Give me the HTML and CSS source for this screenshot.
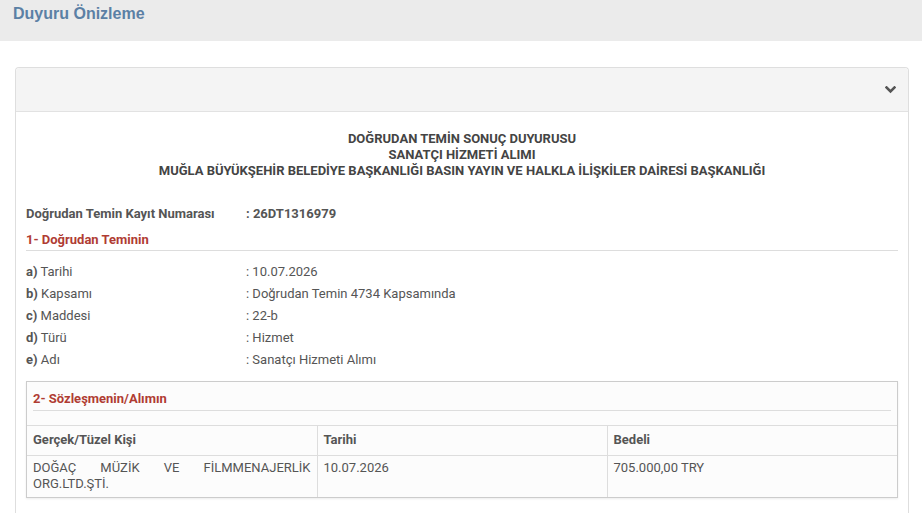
FILE: index.html
```html
<!DOCTYPE html>
<html lang="tr">
<head>
    <meta charset="UTF-8">
    <meta name="viewport" content="width=device-width, initial-scale=1.0">
    <title>Duyuru Önizleme</title>
    <link rel="stylesheet" href="styles.css">
</head>
<body>
    <div class="page-head">
        <h1 class="page-title">Duyuru Önizleme</h1>
    </div>

    <div class="panel">
        <div class="panel-head">
            <svg class="chevron" width="11" height="8" viewBox="0 0 11 8">
                <polyline points="1.5,1.5 5.5,5.5 9.5,1.5" fill="none" stroke="#555" stroke-width="2.6" stroke-linecap="square"/>
            </svg>
        </div>
        <div class="panel-body">
            <div class="doc-title">
                DOĞRUDAN TEMİN SONUÇ DUYURUSU<br>
                SANATÇI HİZMETİ ALIMI<br>
                MUĞLA BÜYÜKŞEHİR BELEDİYE BAŞKANLIĞI BASIN YAYIN VE HALKLA İLİŞKİLER DAİRESİ BAŞKANLIĞI
            </div>

            <div class="row reg-row">
                <span class="key">Doğrudan Temin Kayıt Numarası</span>
                <span class="val">: 26DT1316979</span>
            </div>

            <h3 class="section">1- Doğrudan Teminin</h3>

            <div class="rows">
                <div class="row"><span class="key"><b>a)</b> Tarihi</span><span class="val">: 10.07.2026</span></div>
                <div class="row"><span class="key"><b>b)</b> Kapsamı</span><span class="val">: Doğrudan Temin 4734 Kapsamında</span></div>
                <div class="row"><span class="key"><b>c)</b> Maddesi</span><span class="val">: 22-b</span></div>
                <div class="row"><span class="key"><b>d)</b> Türü</span><span class="val">: Hizmet</span></div>
                <div class="row"><span class="key"><b>e)</b> Adı</span><span class="val">: Sanatçı Hizmeti Alımı</span></div>
            </div>

            <div class="box">
                <h3 class="section box-section">2- Sözleşmenin/Alımın</h3>
                <table class="grid">
                    <thead>
                        <tr>
                            <th>Gerçek/Tüzel Kişi</th>
                            <th>Tarihi</th>
                            <th>Bedeli</th>
                        </tr>
                    </thead>
                    <tbody>
                        <tr>
                            <td class="justify">DOĞAÇ MÜZİK VE FİLMMENAJERLİK ORG.LTD.ŞTİ.</td>
                            <td>10.07.2026</td>
                            <td>705.000,00 TRY</td>
                        </tr>
                    </tbody>
                </table>
            </div>
        </div>
    </div>
</body>
</html>
```

FILE: styles.css
```css
body {
    margin: 0;
    padding: 0;
    font-family: Roboto, "Liberation Sans", Arial, sans-serif;
    font-size: 13px;
    color: #555;
    background-color: #fff;
}

.page-head {
    height: 41px;
    background-color: #ebebeb;
    padding: 0 13px;
}

.page-title {
    margin: 0;
    padding-top: 4px;
    font-family: "Liberation Sans", Arial, sans-serif;
    font-size: 16px;
    line-height: 20px;
    font-weight: bold;
    color: #5b80a5;
}

.panel {
    margin: 26px 13px 0 15px;
    border: 1px solid #dedede;
    border-bottom: none;
    border-radius: 4px 4px 0 0;
}

.panel-head {
    height: 43px;
    background-color: #f4f4f4;
    border-bottom: 1px solid #e2e2e2;
    border-radius: 4px 4px 0 0;
    display: flex;
    align-items: center;
    justify-content: flex-end;
    padding-right: 12px;
}

.chevron {
    display: block;
    margin-top: 1px;
}

.panel-body {
    padding: 19px 10px 20px 10px;
}

.doc-title {
    text-align: center;
    font-weight: bold;
    color: #444;
    line-height: 16px;
}

.row {
    display: flex;
    line-height: 22px;
}

.key {
    width: 220px;
    flex-shrink: 0;
}

.key b {
    color: #555;
}

.reg-row {
    margin-top: 24px;
    font-weight: bold;
}

.section {
    margin: 0;
    padding-top: 5px;
    font-size: 13px;
    line-height: 20px;
    font-weight: bold;
    color: #b03c33;
    border-bottom: 1px solid #ddd;
}

.rows {
    margin-top: 10px;
}

.box {
    margin-top: 10px;
    background-color: #fcfcfc;
    border: 1px solid #ccc;
    box-shadow: 0 1px 2px rgba(0, 0, 0, 0.08);
}

.box-section {
    margin: 0 6px;
    padding-top: 7px;
    padding-bottom: 1px;
}

.grid {
    width: 100%;
    margin-top: 14px;
    border-collapse: collapse;
    table-layout: fixed;
}

.grid th,
.grid td {
    border-top: 1px solid #ddd;
    border-left: 1px solid #ddd;
    text-align: left;
    vertical-align: top;
    line-height: 16px;
}

.grid th:first-child,
.grid td:first-child {
    border-left: none;
}

.grid th {
    padding: 6px 6px 7px 6px;
    font-weight: bold;
}

.grid td {
    padding: 4px 6px 5px 6px;
}

.grid td.justify {
    text-align: justify;
}
```
